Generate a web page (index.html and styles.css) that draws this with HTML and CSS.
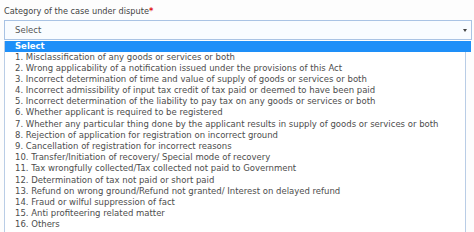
FILE: index.html
```html
<!DOCTYPE html>
<html>
<head>
  <title>Category of the case</title>
  <link rel="stylesheet" href="styles.css">
</head>
<body>
  <div class="field">
    <label class="field-label">Category of the case under dispute<span class="req">*</span></label>
    <div class="select-box">
      <span>Select</span>
      <span class="caret"></span>
    </div>
    <ul class="options">
      <li class="active">Select</li>
      <li>1. Misclassification of any goods or services or both</li>
      <li>2. Wrong applicability of a notification issued under the provisions of this Act</li>
      <li>3. Incorrect determination of time and value of supply of goods or services or both</li>
      <li>4. Incorrect admissibility of input tax credit of tax paid or deemed to have been paid</li>
      <li>5. Incorrect determination of the liability to pay tax on any goods or services or both</li>
      <li>6. Whether applicant is required to be registered</li>
      <li>7. Whether any particular thing done by the applicant results in supply of goods or services or both</li>
      <li>8. Rejection of application for registration on incorrect ground</li>
      <li>9. Cancellation of registration for incorrect reasons</li>
      <li>10. Transfer/Initiation of recovery/ Special mode of recovery</li>
      <li>11. Tax wrongfully collected/Tax collected not paid to Government</li>
      <li>12. Determination of tax not paid or short paid</li>
      <li>13. Refund on wrong ground/Refund not granted/ Interest on delayed refund</li>
      <li>14. Fraud or wilful suppression of fact</li>
      <li>15. Anti profiteering related matter</li>
      <li>16. Others</li>
    </ul>
  </div>
</body>
</html>
```

FILE: styles.css
```css
body {
  margin: 0;
  background-color: #fdfdfd;
  font-family: 'DejaVu Sans', Verdana, sans-serif;
  font-size: 8.5px;
  color: #4d4d4d;
}

.field {
  padding: 5px 2px 0 4px;
}

.field-label {
  display: block;
  height: 15px;
  line-height: 12px;
  font-size: 8.2px;
  color: #444;
}

.req {
  color: #e01010;
  font-weight: bold;
}

.select-box {
  display: flex;
  justify-content: space-between;
  align-items: center;
  height: 18px;
  border: 1px solid #a9c3e4;
  background-color: #f9fcff;
  padding: 0 4px 0 10px;
  color: #555;
}

.caret {
  width: 0;
  height: 0;
  border-left: 2px solid transparent;
  border-right: 2px solid transparent;
  border-top: 3px solid #444;
}

.options {
  list-style: none;
  margin: 1px 6px 0 0;
  padding: 0 0 2px 0;
  background-color: #fff;
  border: 1px solid #b9cde6;
  border-top: none;
}

.options li {
  height: 11.2px;
  line-height: 11.2px;
  padding-left: 10px;
  white-space: nowrap;
}

.options li.active {
  height: 10.5px;
  line-height: 10.5px;
  background-color: #1e8ff8;
  color: #fff;
  font-weight: bold;
  margin-right: -6px;
}
```
